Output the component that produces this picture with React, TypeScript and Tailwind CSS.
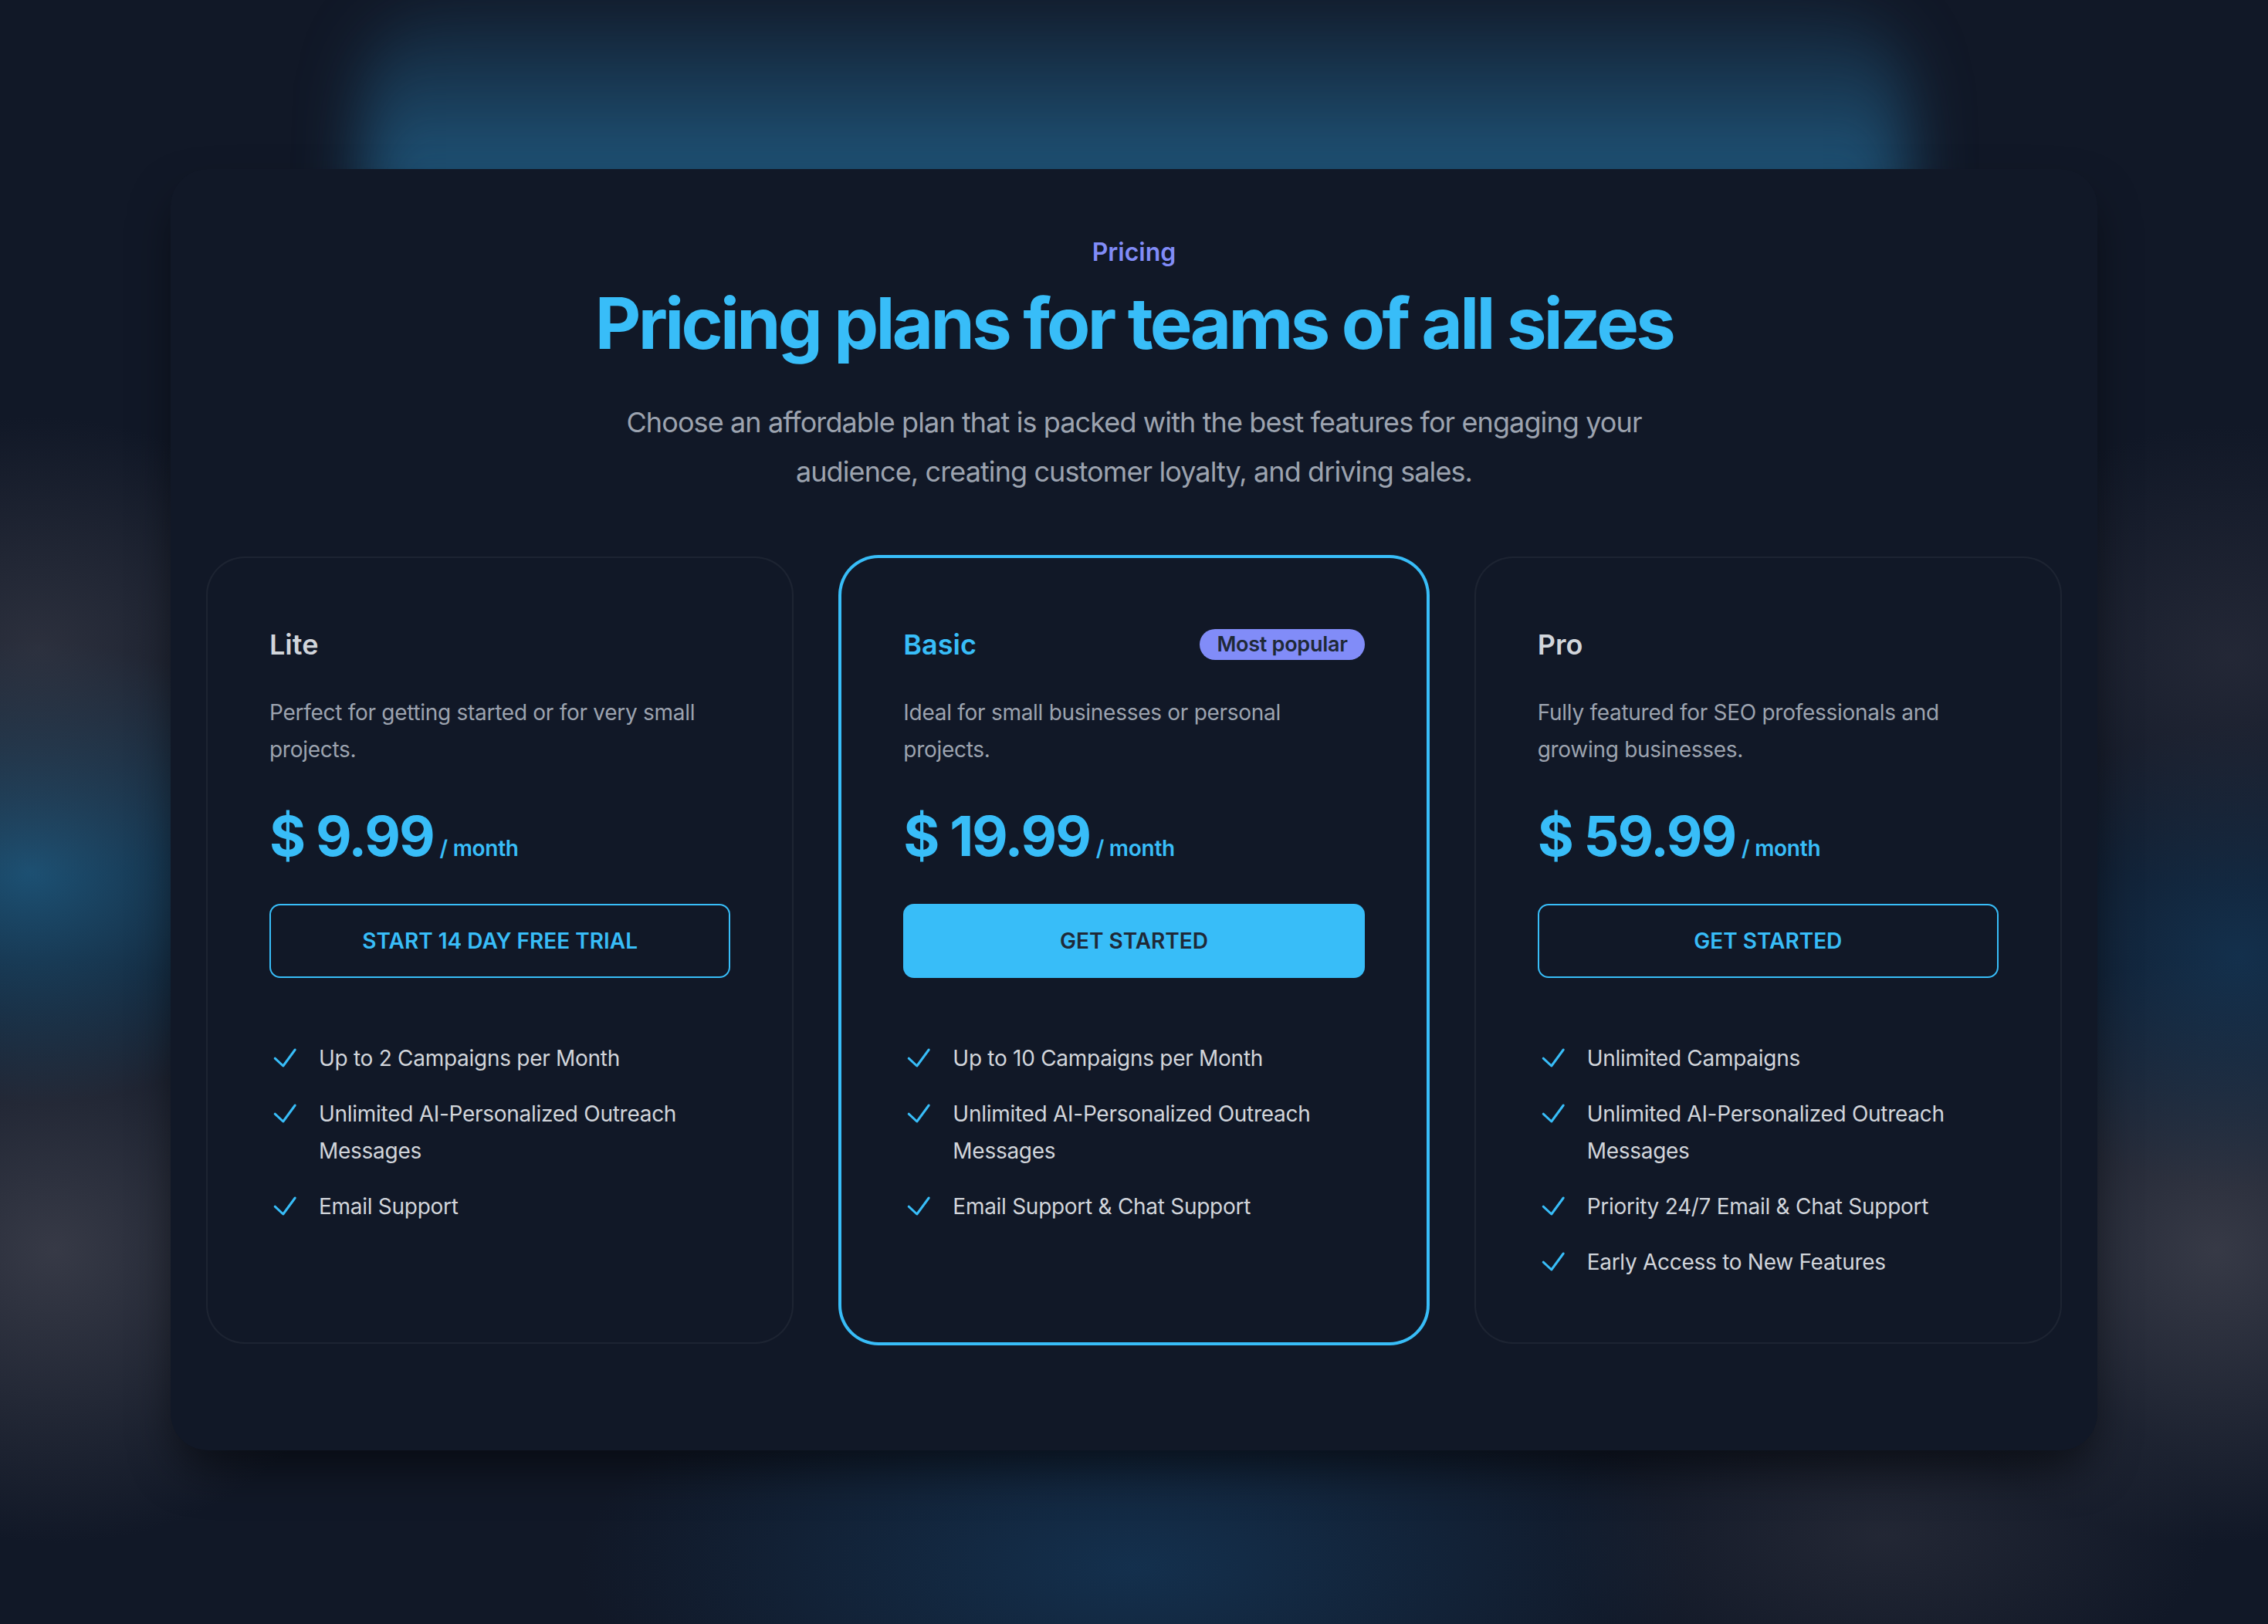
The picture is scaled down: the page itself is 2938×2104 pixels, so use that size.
import clsx from 'clsx';

const tiers = [
  {
    id: 'lite',
    name: 'Lite',
    description: 'Perfect for getting started or for very small projects.',
    price: '$ 9.99',
    cta: 'Start 14 day free trial',
    features: ['Up to 2 Campaigns per Month', 'Unlimited AI-Personalized Outreach Messages', 'Email Support'],
    featured: false,
  },
  {
    id: 'basic',
    name: 'Basic',
    description: 'Ideal for small businesses or personal projects.',
    price: '$ 19.99',
    cta: 'Get started',
    features: [
      'Up to 10 Campaigns per Month',
      'Unlimited AI-Personalized Outreach Messages',
      'Email Support & Chat Support',
    ],
    featured: true,
  },
  {
    id: 'pro',
    name: 'Pro',
    description: 'Fully featured for SEO professionals and growing businesses.',
    price: '$ 59.99',
    cta: 'Get started',
    features: [
      'Unlimited Campaigns',
      'Unlimited AI-Personalized Outreach Messages',
      'Priority 24/7 Email & Chat Support',
      'Early Access to New Features',
    ],
    featured: false,
  },
];

const CheckIcon = () => (
  <svg viewBox="0 0 20 20" fill="none" className="h-[48px] w-[40px] flex-none text-[#38bdf8]" aria-hidden="true">
    <path d="M3.6 10.1 8.9 15 16.6 4.5" stroke="currentColor" strokeWidth="1.5" strokeLinecap="round" strokeLinejoin="round" />
  </svg>
);

export default function App() {
  return (
    <div
      className="relative min-h-screen overflow-hidden bg-[#111827] bg-[image:radial-gradient(380px_300px_at_50px_840px,rgba(62,64,76,0.6),transparent),radial-gradient(400px_300px_at_40px_1130px,rgba(30,90,128,0.85),transparent),radial-gradient(420px_380px_at_70px_1620px,rgba(64,66,78,0.8),transparent),radial-gradient(380px_300px_at_2890px_850px,rgba(50,52,66,0.55),transparent),radial-gradient(360px_300px_at_2900px_1240px,rgba(20,58,92,0.7),transparent),radial-gradient(420px_380px_at_2870px_1620px,rgba(64,66,78,0.8),transparent),radial-gradient(720px_300px_at_1469px_2030px,rgba(20,52,84,0.85),transparent),radial-gradient(420px_220px_at_2440px_1990px,rgba(52,54,66,0.5),transparent)] pb-[223px] pt-[219px]"
      style={{ fontFamily: 'Inter, "Noto Sans", sans-serif' }}
    >
      {/* glow behind the top edge of the card */}
      <div
        className="pointer-events-none absolute left-[470px] top-0 h-[440px] w-[2000px] rounded-[120px] bg-linear-to-b from-[#22618a]/10 via-[#22618a]/80 via-50% to-[#22618a]/80 blur-[40px]"
        aria-hidden="true"
      />
      <div className="relative mx-auto w-[2496px] rounded-[48px] bg-[#111827] px-[48px] pb-[140px] pt-[80px] shadow-[0_30px_60px_-10px_rgba(0,0,0,0.55)]">
        <div className="text-center">
          <p className="text-[32px] font-semibold leading-[56px] text-[#818cf8]">Pricing</p>
          <h1 className="mt-[16px] text-[92px] font-bold leading-[96px] tracking-[-0.04em] text-[#38bdf8]">
            Pricing plans for teams of all sizes
          </h1>
        </div>
        <p className="mx-auto mt-[48px] max-w-[1370px] text-center text-[36px] leading-[64px] tracking-[-0.025em] text-[#9ca3af]">
          Choose an affordable plan that is packed with the best features for engaging your audience, creating customer
          loyalty, and driving sales.
        </p>
        <div className="mt-[80px] grid grid-cols-3 gap-[64px]">
          {tiers.map((tier) => (
            <div
              key={tier.id}
              className={clsx(
                'rounded-[48px] p-[80px]',
                tier.featured ? 'ring-4 ring-[#38bdf8]' : 'ring-2 ring-white/5'
              )}
            >
              <div className="flex items-center justify-between gap-x-[32px]">
                <h3
                  className={clsx(
                    'text-[36px] font-semibold leading-[64px]',
                    tier.featured ? 'text-[#38bdf8]' : 'text-[#d1d5db]'
                  )}
                >
                  {tier.name}
                </h3>
                {tier.featured && (
                  <p className="rounded-full bg-[#818cf8] px-[22px] text-[27px] font-semibold leading-[40px] tracking-[-0.01em] text-[#1f2937]">
                    Most popular
                  </p>
                )}
              </div>
              <p className="mt-[32px] text-[28px] leading-[48px] tracking-[-0.01em] text-[#9ca3af]">{tier.description}</p>
              <p className="mt-[48px] flex items-baseline gap-x-[8px]">
                <span className="text-[72px] font-bold leading-[80px] tracking-[-0.03em] text-[#38bdf8]">{tier.price}</span>
                <span className="text-[28px] font-semibold leading-[48px] tracking-[-0.01em] text-[#38bdf8]">/ month</span>
              </p>
              <a
                href="#"
                className={clsx(
                  'mt-[48px] block rounded-[14px] px-[24px] py-[24px] text-center text-[28px] font-semibold uppercase leading-[48px]',
                  tier.featured ? 'bg-[#38bdf8] text-[#1f2937]' : 'text-[#38bdf8] ring-2 ring-inset ring-[#38bdf8]'
                )}
              >
                {tier.cta}
              </a>
              <ul className="mt-[80px] space-y-[24px] text-[28px] leading-[48px] tracking-[-0.01em] text-[#d1d5db]">
                {tier.features.map((feature) => (
                  <li key={feature} className="flex gap-x-[24px]">
                    <CheckIcon />
                    {feature}
                  </li>
                ))}
              </ul>
            </div>
          ))}
        </div>
      </div>
    </div>
  );
}
